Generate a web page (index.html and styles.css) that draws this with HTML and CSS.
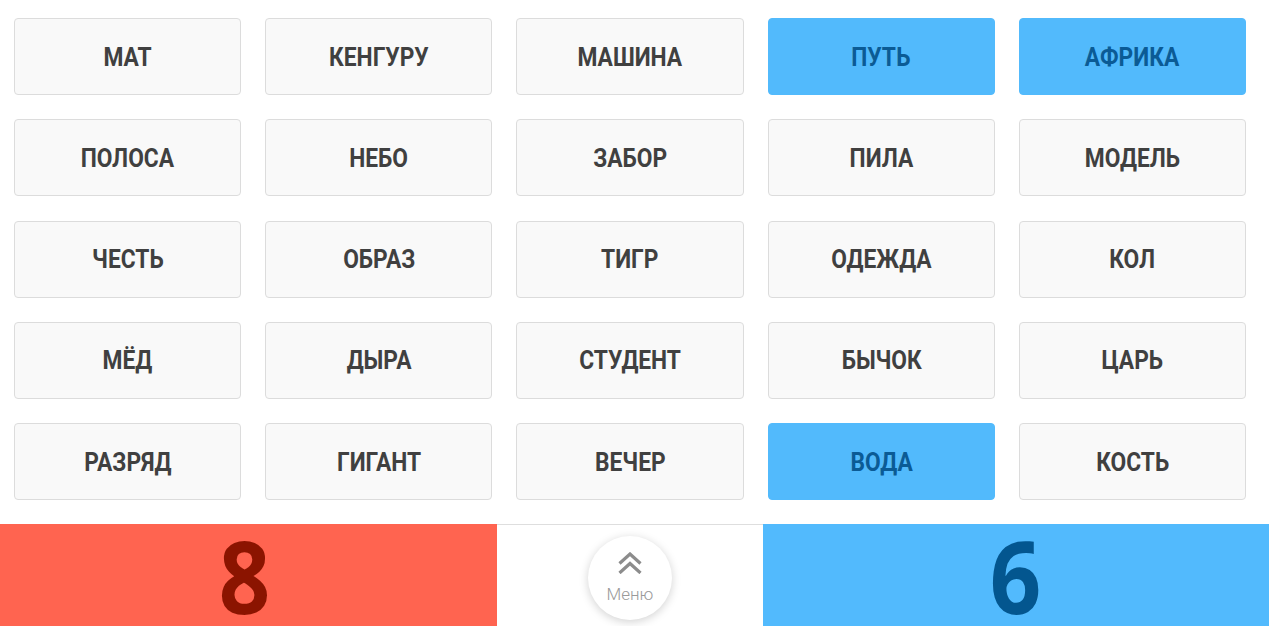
FILE: index.html
```html
<!DOCTYPE html>
<html lang="ru">
<head>
<meta charset="utf-8">
<title>Слова</title>
<link rel="stylesheet" href="styles.css">
</head>
<body>
<main class="board">
  <div class="card"><span class="word">МАТ</span></div>
  <div class="card"><span class="word">КЕНГУРУ</span></div>
  <div class="card"><span class="word">МАШИНА</span></div>
  <div class="card card-blue"><span class="word">ПУТЬ</span></div>
  <div class="card card-blue"><span class="word">АФРИКА</span></div>

  <div class="card"><span class="word">ПОЛОСА</span></div>
  <div class="card"><span class="word">НЕБО</span></div>
  <div class="card"><span class="word">ЗАБОР</span></div>
  <div class="card"><span class="word">ПИЛА</span></div>
  <div class="card"><span class="word">МОДЕЛЬ</span></div>

  <div class="card"><span class="word">ЧЕСТЬ</span></div>
  <div class="card"><span class="word">ОБРАЗ</span></div>
  <div class="card"><span class="word">ТИГР</span></div>
  <div class="card"><span class="word">ОДЕЖДА</span></div>
  <div class="card"><span class="word">КОЛ</span></div>

  <div class="card"><span class="word">МЁД</span></div>
  <div class="card"><span class="word">ДЫРА</span></div>
  <div class="card"><span class="word">СТУДЕНТ</span></div>
  <div class="card"><span class="word">БЫЧОК</span></div>
  <div class="card"><span class="word">ЦАРЬ</span></div>

  <div class="card"><span class="word">РАЗРЯД</span></div>
  <div class="card"><span class="word">ГИГАНТ</span></div>
  <div class="card"><span class="word">ВЕЧЕР</span></div>
  <div class="card card-blue"><span class="word">ВОДА</span></div>
  <div class="card"><span class="word">КОСТЬ</span></div>
</main>
<footer class="scorebar">
  <div class="score score-red"><span class="digit">8</span></div>
  <div class="menu-zone">
    <button class="menu-btn" type="button">
      <svg class="menu-icon" width="24" height="22" viewBox="0 0 24 22" aria-hidden="true">
        <path d="M1.5 11.5 L12 2 L22.5 11.5" fill="none" stroke="#8c8c8c" stroke-width="3.2" stroke-linecap="butt" stroke-linejoin="miter"/>
        <path d="M1.5 21 L12 11.5 L22.5 21" fill="none" stroke="#8c8c8c" stroke-width="3.2" stroke-linecap="butt" stroke-linejoin="miter"/>
      </svg>
      <span class="menu-label">Меню</span>
    </button>
  </div>
  <div class="score score-blue"><span class="digit">6</span></div>
</footer>
</body>
</html>
```

FILE: styles.css
```css
html, body {
  margin: 0;
  padding: 0;
  background: #ffffff;
}

body {
  width: 1269px;
  height: 626px;
  overflow: hidden;
  font-family: Roboto, "Noto Sans", sans-serif;
}

.board {
  display: grid;
  grid-template-columns: repeat(5, 1fr);
  grid-auto-rows: 77px;
  column-gap: 24px;
  row-gap: 24.25px;
  padding: 18px 23px 0 14px;
}

.card {
  box-sizing: border-box;
  background: #f9f9f9;
  border: 1px solid #dcdcdc;
  border-radius: 4px;
  display: flex;
  align-items: center;
  justify-content: center;
}

.word {
  display: inline-block;
  font-family: Roboto, "Noto Sans", sans-serif;
  font-weight: 700;
  font-size: 26px;
  color: #404040;
  transform: scaleX(0.875);
  white-space: nowrap;
}

.card-blue {
  background: #52bafc;
  border-color: #52bafc;
}

.card-blue .word {
  color: #0b5b95;
}

.scorebar {
  display: flex;
  height: 102px;
  margin-top: 24px;
}

.score {
  display: flex;
  align-items: center;
  justify-content: center;
}

.digit {
  display: block;
  font-family: "Open Sans", "Noto Sans", sans-serif;
  font-weight: 700;
  font-size: 100px;
  line-height: 80px;
  transform: scaleX(0.9);
}

.score-red {
  width: 497px;
  background: #ff6450;
  color: #8b1400;
}

.score-red .digit {
  margin-left: -8px;
}

.score-blue {
  flex: 1;
  background: #52bafd;
  color: #03568f;
}

.menu-zone {
  width: 266px;
  box-sizing: border-box;
  border-top: 1px solid #dedede;
  display: flex;
  justify-content: center;
  padding-top: 11px;
}

.menu-btn {
  width: 84px;
  height: 84px;
  border-radius: 50%;
  border: none;
  background: #ffffff;
  box-shadow: 0 2px 10px rgba(0, 0, 0, 0.18);
  display: flex;
  flex-direction: column;
  align-items: center;
  justify-content: flex-start;
  padding: 16px 0 0;
  gap: 12px;
  cursor: pointer;
}

.menu-icon {
  display: block;
}

.menu-label {
  font-family: Roboto, "Noto Sans", sans-serif;
  font-weight: 300;
  font-size: 17px;
  color: #9a9a9a;
  line-height: 1;
}
```
